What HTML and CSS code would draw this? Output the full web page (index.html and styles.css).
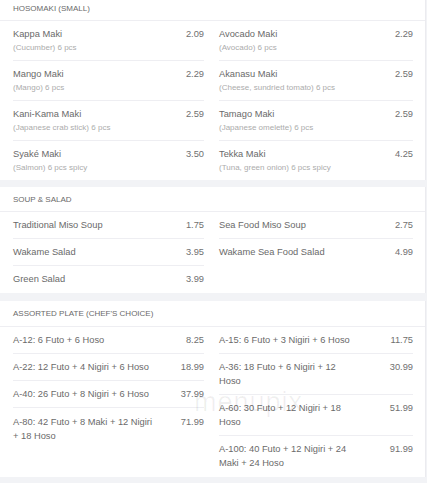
FILE: index.html
```html
<!DOCTYPE html>
<html>
<head>
<meta charset="utf-8">
<link rel="stylesheet" href="styles.css">
</head>
<body>
<div class="page">
  <section class="card first">
    <div class="card-head">HOSOMAKI (SMALL)</div>
    <div class="cols">
      <div class="col">
        <div class="item"><div class="info"><div class="name">Kappa Maki</div><div class="desc">(Cucumber) 6 pcs</div></div><div class="price">2.09</div></div>
        <div class="item"><div class="info"><div class="name">Mango Maki</div><div class="desc">(Mango) 6 pcs</div></div><div class="price">2.29</div></div>
        <div class="item"><div class="info"><div class="name">Kani-Kama Maki</div><div class="desc">(Japanese crab stick) 6 pcs</div></div><div class="price">2.59</div></div>
        <div class="item"><div class="info"><div class="name">Syaké Maki</div><div class="desc">(Salmon) 6 pcs spicy</div></div><div class="price">3.50</div></div>
      </div>
      <div class="col">
        <div class="item"><div class="info"><div class="name">Avocado Maki</div><div class="desc">(Avocado) 6 pcs</div></div><div class="price">2.29</div></div>
        <div class="item"><div class="info"><div class="name">Akanasu Maki</div><div class="desc">(Cheese, sundried tomato) 6 pcs</div></div><div class="price">2.59</div></div>
        <div class="item"><div class="info"><div class="name">Tamago Maki</div><div class="desc">(Japanese omelette) 6 pcs</div></div><div class="price">2.59</div></div>
        <div class="item"><div class="info"><div class="name">Tekka Maki</div><div class="desc">(Tuna, green onion) 6 pcs spicy</div></div><div class="price">4.25</div></div>
      </div>
    </div>
  </section>

  <section class="card soup">
    <div class="card-head">SOUP &amp; SALAD</div>
    <div class="cols">
      <div class="col">
        <div class="item"><div class="info"><div class="name">Traditional Miso Soup</div></div><div class="price">1.75</div></div>
        <div class="item"><div class="info"><div class="name">Wakame Salad</div></div><div class="price">3.95</div></div>
        <div class="item"><div class="info"><div class="name">Green Salad</div></div><div class="price">3.99</div></div>
      </div>
      <div class="col">
        <div class="item"><div class="info"><div class="name">Sea Food Miso Soup</div></div><div class="price">2.75</div></div>
        <div class="item"><div class="info"><div class="name">Wakame Sea Food Salad</div></div><div class="price">4.99</div></div>
      </div>
    </div>
  </section>

  <section class="card last">
    <div class="card-head">ASSORTED PLATE (CHEF'S CHOICE)</div>
    <div class="cols">
      <div class="col left">
        <div class="item"><div class="info"><div class="name">A-12: 6 Futo + 6 Hoso</div></div><div class="price">8.25</div></div>
        <div class="item"><div class="info"><div class="name">A-22: 12 Futo + 4 Nigiri + 6 Hoso</div></div><div class="price">18.99</div></div>
        <div class="item"><div class="info"><div class="name">A-40: 26 Futo + 8 Nigiri + 6 Hoso</div></div><div class="price">37.99</div></div>
        <div class="item"><div class="info"><div class="name">A-80: 42 Futo + 8 Maki + 12 Nigiri + 18 Hoso</div></div><div class="price">71.99</div></div>
      </div>
      <div class="col">
        <div class="item"><div class="info"><div class="name">A-15: 6 Futo + 3 Nigiri + 6 Hoso</div></div><div class="price">11.75</div></div>
        <div class="item"><div class="info"><div class="name">A-36: 18 Futo + 6 Nigiri + 12 Hoso</div></div><div class="price">30.99</div></div>
        <div class="item"><div class="info"><div class="name">A-60: 30 Futo + 12 Nigiri + 18 Hoso</div></div><div class="price">51.99</div></div>
        <div class="item"><div class="info"><div class="name">A-100: 40 Futo + 12 Nigiri + 24 Maki + 24 Hoso</div></div><div class="price">91.99</div></div>
      </div>
    </div>
    <div class="watermark">menupix</div>
  </section>
</div>
</body>
</html>
```

FILE: styles.css
```css
html, body {
  margin: 0;
  padding: 0;
  background: #f2f3f6;
  font-family: "Liberation Sans", Arial, sans-serif;
}

.page {
  display: flex;
  flex-direction: column;
  gap: 7px;
  margin-top: -4px;
  width: 426px;
}

.card {
  background: #fff;
  border-right: 1px solid #ebebef;
  position: relative;
}

.card-head {
  height: 24px;
  line-height: 25px;
  padding-left: 13px;
  font-size: 8px;
  color: #6a6a6a;
  border-bottom: 1px solid #eeeef2;
}

.cols {
  display: grid;
  grid-template-columns: 191px 194px;
  column-gap: 15px;
  padding: 0 0 0 13px;
  align-items: start;
}

.col {
  display: flex;
  flex-direction: column;
}

.item {
  display: flex;
  justify-content: space-between;
  align-items: flex-start;
  padding: 6px 0 6px;
  border-bottom: 1px solid #eeeef2;
}

.col .item:last-child {
  border-bottom: none;
}

.info {
  flex: 0 1 141px;
}

.name {
  font-size: 9.3px;
  line-height: 14px;
  color: #6a6a6a;
}

.desc {
  font-size: 8px;
  line-height: 13px;
  color: #acacac;
}

.price {
  font-size: 9.3px;
  line-height: 14px;
  color: #707070;
  text-align: right;
  white-space: nowrap;
}

.soup {
  padding-bottom: 1px;
  margin-bottom: 1px;
}

.last .card-head {
  height: 25px;
  line-height: 26px;
}

.last .left .item:nth-child(4) {
  padding-top: 7px;
}

.last .cols {
  padding-bottom: 1px;
}

.watermark {
  position: absolute;
  left: 194px;
  top: 86px;
  font-size: 27px;
  letter-spacing: 1px;
  color: rgba(0, 0, 0, 0.06);
  pointer-events: none;
}
```
